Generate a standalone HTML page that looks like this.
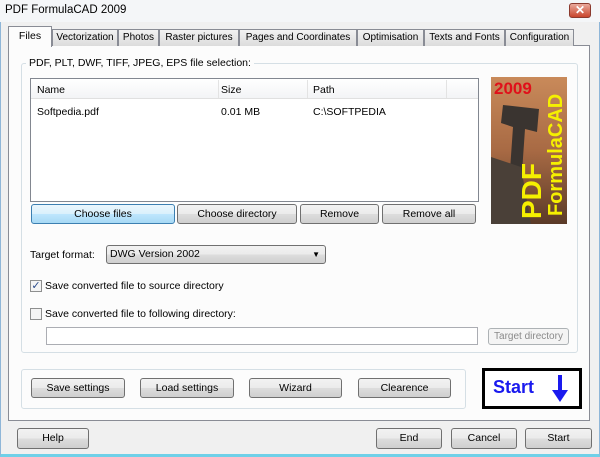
<!DOCTYPE html>
<html><head><style>
*{box-sizing:border-box;margin:0;padding:0}
body{width:600px;height:457px;overflow:hidden;background:#f0f0f0;font:10.5px "Liberation Sans",sans-serif;color:#000;position:relative}
.a{position:absolute}
.btn{position:absolute;border:1px solid #707070;border-radius:3px;background:linear-gradient(#f2f2f2 0%,#ebebeb 50%,#dddddd 51%,#cfcfcf 100%);text-align:center;line-height:18px;font-size:10.5px}
.tab{position:absolute;top:29px;height:17px;border:1px solid #898c95;border-bottom:none;background:linear-gradient(#f2f2f2,#dcdcdc);text-align:center;line-height:15px;font-size:10px;white-space:nowrap;overflow:hidden}
.grp{position:absolute;border:1px solid #d5dfe5;border-radius:3px}
</style></head><body>
<div class="a" style="left:0;top:0;width:600px;height:457px;border:1px solid #8fb6d8;border-bottom:3px solid #6fd0e8"></div>
<div class="a" style="left:0;top:0;width:600px;height:22px;background:#f4f6f8"></div>
<div class="a" style="left:5px;top:4px;font-size:11.5px">PDF FormulaCAD 2009</div>
<div class="a" style="left:569px;top:3px;width:22px;height:15px;border:1px solid #8b3a2e;border-radius:3px;background:linear-gradient(#e9a99c,#c9452c);color:#fff;font-weight:bold;text-align:center;line-height:13px;font-size:12px">✕</div>

<div class="a" style="left:8px;top:45px;width:582px;height:376px;border:1px solid #898c95;background:#fcfcfc"></div>
<div class="tab" style="left:52px;width:66px">Vectorization</div>
<div class="tab" style="left:118px;width:41px">Photos</div>
<div class="tab" style="left:159px;width:80px">Raster pictures</div>
<div class="tab" style="left:239px;width:118px">Pages and Coordinates</div>
<div class="tab" style="left:357px;width:67px">Optimisation</div>
<div class="tab" style="left:424px;width:81px">Texts and Fonts</div>
<div class="tab" style="left:505px;width:69px">Configuration</div>
<div class="a" style="left:8px;top:26px;width:44px;height:21px;border:1px solid #898c95;border-bottom:none;background:#fcfcfc;text-align:center;line-height:18px">Files</div>

<div class="grp" style="left:21px;top:63px;width:557px;height:290px"></div>
<div class="a" style="left:26px;top:57px;background:#fcfcfc;padding:0 3px">PDF, PLT, DWF, TIFF, JPEG, EPS file selection:</div>

<div class="a" style="left:30px;top:78px;width:449px;height:124px;border:1px solid #828790;background:#fff"></div>
<div class="a" style="left:31px;top:79px;width:447px;height:20px;border-bottom:1px solid #e0e0e0;background:linear-gradient(#fff,#f3f4f6)"></div>
<div class="a" style="left:218px;top:80px;width:1px;height:18px;background:#e3e3e3"></div>
<div class="a" style="left:307px;top:80px;width:1px;height:18px;background:#e3e3e3"></div>
<div class="a" style="left:446px;top:80px;width:1px;height:18px;background:#e3e3e3"></div>
<div class="a" style="left:37px;top:84px">Name</div>
<div class="a" style="left:221px;top:84px">Size</div>
<div class="a" style="left:313px;top:84px">Path</div>
<div class="a" style="left:37px;top:106px">Softpedia.pdf</div>
<div class="a" style="left:221px;top:106px">0.01 MB</div>
<div class="a" style="left:313px;top:106px">C:\SOFTPEDIA</div>

<svg class="a" style="left:491px;top:77px" width="76" height="147" viewBox="0 0 76 147">
<defs><linearGradient id="g" x1="0" y1="0" x2="0" y2="1"><stop offset="0" stop-color="#c98a5a"/><stop offset=".5" stop-color="#a86a44"/><stop offset="1" stop-color="#5a3a28"/></linearGradient></defs>
<rect width="76" height="147" fill="url(#g)"/>
<path d="M12 28 L48 32 L46 55 L34 52 L30 110 L18 108 L22 50 L10 46Z" fill="#3a3430"/>
<path d="M0 80 L30 90 L40 147 L0 147Z" fill="#4a4038"/>
<text x="3" y="17" fill="#e0101a" font-family="Liberation Sans" font-weight="bold" font-size="17">2009</text>
<text transform="translate(50,142) rotate(-90)" fill="#f5f000" font-family="Liberation Sans" font-weight="bold" font-size="28">PDF</text>
<text transform="translate(71,139) rotate(-90)" fill="#f5f000" font-family="Liberation Sans" font-weight="bold" font-size="20">FormulaCAD</text>
</svg>

<div class="btn" style="left:31px;top:204px;width:144px;height:20px;border-color:#3c7fb1;background:linear-gradient(#eaf6fd,#d9f0fc 50%,#bee6fd 51%,#a7d9f5)">Choose files</div>
<div class="btn" style="left:177px;top:204px;width:120px;height:20px">Choose directory</div>
<div class="btn" style="left:300px;top:204px;width:79px;height:20px">Remove</div>
<div class="btn" style="left:382px;top:204px;width:94px;height:20px">Remove all</div>

<div class="a" style="left:30px;top:249px">Target format:</div>
<div class="btn" style="left:106px;top:245px;width:220px;height:19px;text-align:left;padding-left:3px;line-height:17px">DWG Version 2002<span style="position:absolute;right:5px;top:0;font-size:8px">▼</span></div>

<div class="a" style="left:30px;top:280px;width:12px;height:12px;border:1px solid #8e8f8f;background:#f4f4f4;color:#2a4a8a;font-size:11px;line-height:10px;text-align:center">✓</div>
<div class="a" style="left:45px;top:280px">Save converted file to source directory</div>
<div class="a" style="left:30px;top:308px;width:12px;height:12px;border:1px solid #8e8f8f;background:#f4f4f4"></div>
<div class="a" style="left:45px;top:308px">Save converted file to following directory:</div>
<div class="a" style="left:46px;top:327px;width:432px;height:18px;border:1px solid #abadb3;background:#fff"></div>
<div class="btn" style="left:488px;top:328px;width:81px;height:17px;line-height:15px;color:#8a8a8a;border-color:#adb2b5;background:#f4f4f4;font-size:10px">Target directory</div>

<div class="grp" style="left:21px;top:369px;width:445px;height:40px"></div>
<div class="btn" style="left:31px;top:378px;width:94px;height:20px">Save settings</div>
<div class="btn" style="left:140px;top:378px;width:94px;height:20px">Load settings</div>
<div class="btn" style="left:249px;top:378px;width:93px;height:20px">Wizard</div>
<div class="btn" style="left:358px;top:378px;width:93px;height:20px">Clearence</div>

<div class="a" style="left:482px;top:368px;width:100px;height:41px;border:3px solid #000;background:#fff"></div>
<div class="a" style="left:493px;top:377px;color:#1a1aee;font-weight:bold;font-size:18px">Start</div>
<svg class="a" style="left:550px;top:374px" width="20" height="30" viewBox="0 0 20 30"><rect x="8" y="1" width="4" height="17" fill="#1a1aee"/><path d="M2 16 L18 16 L10 28Z" fill="#1a1aee"/></svg>

<div class="btn" style="left:17px;top:428px;width:72px;height:21px">Help</div>
<div class="btn" style="left:376px;top:428px;width:66px;height:21px">End</div>
<div class="btn" style="left:451px;top:428px;width:66px;height:21px">Cancel</div>
<div class="btn" style="left:525px;top:428px;width:67px;height:21px">Start</div>
</body></html>
